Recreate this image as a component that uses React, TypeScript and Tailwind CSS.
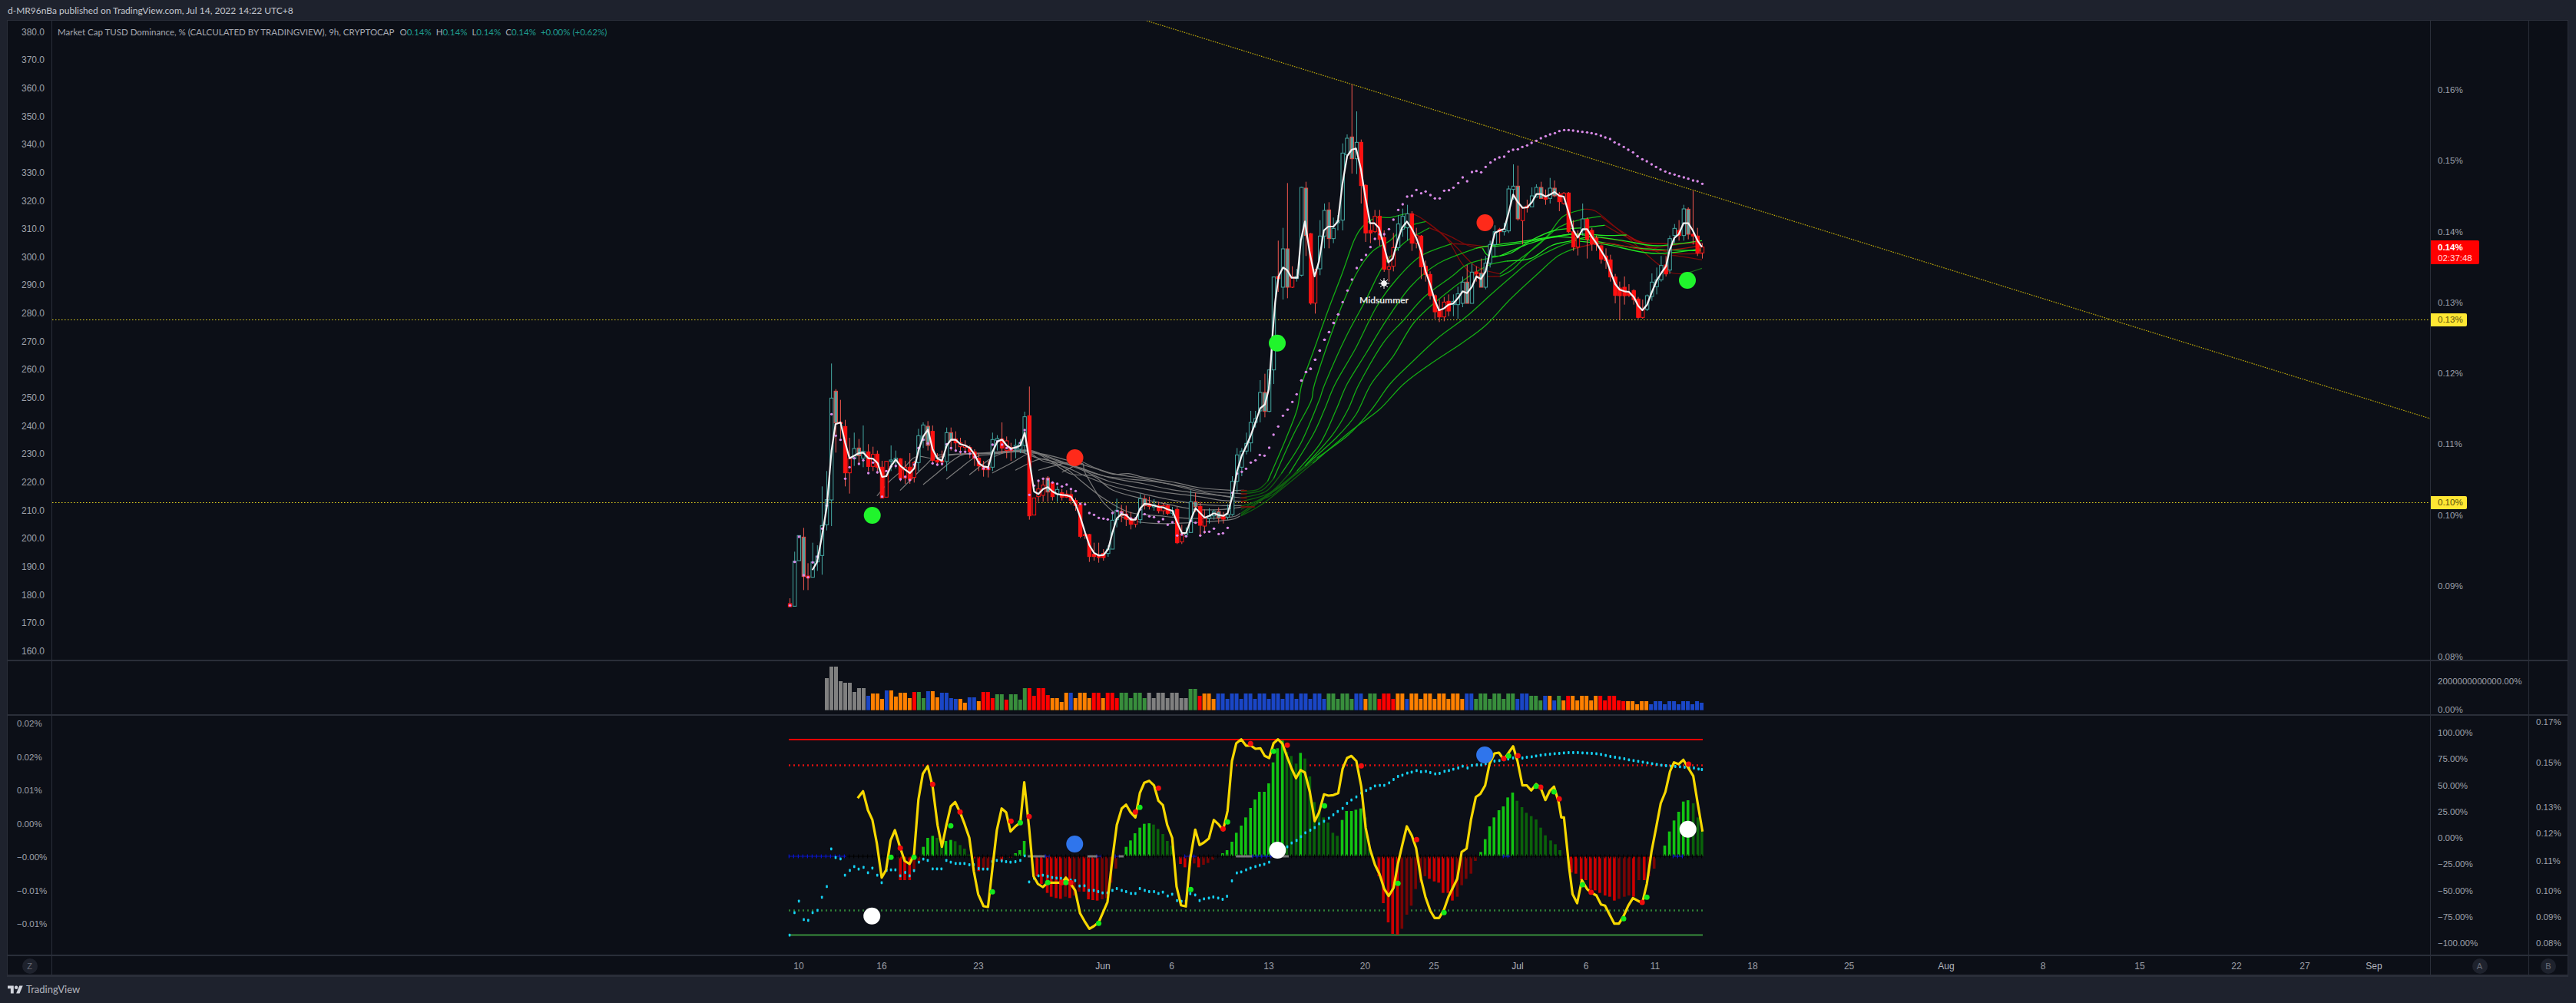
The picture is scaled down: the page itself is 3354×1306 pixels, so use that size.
import React from "react";

type P = [number, number];
const z2 = (x: number, y: number): P => [1000 + x * 0.5102, 400 + y / 3];
const z3 = (x: number, y: number): P => [1600 + x * 0.4464, 100 + y / 3];
const z5 = (x: number, y: number): P => [1000 + x * 0.6378, 850 + y / 3];
const z6 = (x: number, y: number): P => [2000 + x * 0.8635, 850 + y / 3];
const pts = (f: (x: number, y: number) => P, a: number[]): P[] => {
  const r: P[] = [];
  for (let i = 0; i < a.length; i += 2) r.push(f(a[i], a[i + 1]));
  return r;
};
const poly = (p: P[]) => p.map((q) => `${q[0].toFixed(1)},${q[1].toFixed(1)}`).join(" ");
const smooth = (p: P[]) => {
  let d = `M${p[0][0].toFixed(1)} ${p[0][1].toFixed(1)}`;
  for (let i = 0; i < p.length - 1; i++) {
    const a = p[Math.max(0, i - 1)], b = p[i], c = p[i + 1], e = p[Math.min(p.length - 1, i + 2)];
    const c1: P = [b[0] + (c[0] - a[0]) / 6, b[1] + (c[1] - a[1]) / 6];
    const c2: P = [c[0] - (e[0] - b[0]) / 6, c[1] - (e[1] - b[1]) / 6];
    d += `C${c1[0].toFixed(1)} ${c1[1].toFixed(1)} ${c2[0].toFixed(1)} ${c2[1].toFixed(1)} ${c[0].toFixed(1)} ${c[1].toFixed(1)}`;
  }
  return d;
};

const whiteLine: P[] = [
  ...pts(z2, [113,1027,125,995,137,900,150,780,162,560,172,457,185,450,197,530,208,590,222,578,232,570,243,568,256,590,268,592,280,610,291,663,302,660,314,620,326,595,338,620,350,635,362,648,373,630,384,560,396,505,408,478,420,555,432,590,444,600,456,540,467,517,479,518,491,535,503,540,515,550,527,575,538,610,550,622,562,625,573,565,585,525,597,517,609,540,620,552,632,548,644,540,655,490,667,600,679,720,690,730,702,710,714,703,726,720,738,730,750,733,762,735,773,740,785,770,797,820,809,880,820,930,832,960,844,970,856,968,868,945,879,880,890,825,902,808,914,812,926,830,938,830,950,785,961,768,973,770,985,775,997,780,1009,782,1020,790,1032,795,1044,840,1056,882,1067,882,1079,830,1091,785,1103,805,1114,822,1126,815,1138,805,1150,812,1162,815,1173,805,1185,740,1197,640,1209,580,1221,540,1232,500,1244,450,1256,395,1268,380,1278,320,1286,150]),
  ...pts(z3, [118,1200,128,1000,135,880,145,780,158,745,170,755,183,785,200,785,210,640,222,565,235,680,250,780,263,720,277,600,290,585,305,585,318,565,331,420,345,310,358,285,371,280,385,360,398,470,412,572,425,572,438,590,452,660,465,725,478,710,492,640,505,590,519,565,532,590,547,630,560,680,574,760,587,810,600,870,613,912,627,905,641,890,655,885,668,865,682,838,695,845,709,820,722,780,735,790,749,760,762,680,776,610,790,600,803,595,816,530,829,460,843,490,857,512,870,510,884,490,897,458,911,458,924,468,937,460,950,450,964,465,977,468,991,530,1005,600,1018,628,1032,595,1045,595,1059,625,1072,650,1086,680,1100,710,1113,760,1127,810,1140,832,1154,838,1167,840,1181,860,1194,895,1206,912,1220,890,1234,840,1248,795,1262,765,1275,740,1285,680,1299,630,1312,615,1326,572,1340,572,1353,600,1367,640,1380,665]),
];

const candles2 = `56,1158,1170,1137,1170,r 68,992,1168,955,1168,t 79,892,990,892,990,t 91,898,1052,862,1105,f 102,1050,1058,1000,1105,r 114,995,1055,920,1055,t 126,972,995,930,1030,t 138,853,970,700,1045,t 150,752,850,640,872,t 162,355,753,220,855,t 173,328,452,320,568,f 185,450,452,362,512,r 197,466,647,440,700,r 208,592,647,510,728,h 220,552,592,490,620,t 232,550,580,515,610,f 243,563,590,462,625,t 256,565,622,535,640,r 268,575,622,545,640,h 279,574,625,560,650,r 291,625,745,600,745,r 302,602,742,600,742,h 314,597,602,540,640,t 326,590,600,560,630,t 338,592,668,590,680,r 350,625,668,600,690,h 362,625,675,570,690,r 373,607,665,600,685,h 384,502,607,475,640,t 396,460,520,450,550,t 408,465,540,445,560,f 420,485,598,462,615,r 432,598,605,570,620,r 444,600,605,560,620,r 456,490,603,470,640,t 467,490,520,470,560,f 479,515,530,485,565,r 491,530,545,510,575,h 503,540,548,520,575,h 515,548,565,540,590,r 527,565,590,555,620,r 538,590,620,570,640,r 550,622,635,600,662,r 562,625,635,600,665,h 573,517,625,490,640,t 585,513,520,500,560,t 597,515,550,450,570,r 609,522,560,505,590,h 620,548,560,530,600,r 632,540,555,515,590,t 644,530,555,515,570,t 655,428,540,408,570,t 667,424,815,310,830,r 679,745,812,745,812,h 690,710,740,680,760,h 702,695,735,665,760,h 714,667,722,660,760,f 726,687,740,680,755,r 738,712,730,700,760,t 750,725,742,710,755,r 762,730,742,715,745,r 773,732,755,710,770,r 785,755,775,745,795,r 797,772,895,765,902,r 809,888,892,880,905,r 820,888,974,885,995,r 832,965,974,920,990,r 844,968,978,920,998,r 856,962,978,945,990,r 868,945,962,930,975,t 879,832,945,800,945,t 890,793,830,748,860,t 902,797,815,772,840,f 914,808,828,775,855,r 926,825,848,800,868,r 938,828,848,820,860,h 950,748,830,730,845,t 961,748,775,735,790,f 973,768,778,740,790,r 985,772,780,750,795,t 997,775,795,760,805,r 1009,775,795,765,810,h 1020,775,805,770,812,r 1032,795,805,780,815,t 1044,790,920,780,925,r 1056,885,917,850,925,h 1067,882,890,860,895,t 1079,760,880,715,880,t 1091,760,780,725,800,f 1103,778,852,760,895,r 1114,825,855,790,885,h 1126,815,825,785,845,t 1138,798,815,790,830,t 1150,798,825,782,845,f 1162,818,828,800,845,r 1173,810,820,770,830,t 1185,680,810,660,815,t 1197,577,680,550,725,t 1209,562,625,550,660,t 1221,532,562,490,575,t 1232,450,530,405,565,t 1244,435,450,405,470,t 1256,333,405,285,450,t 1268,333,407,260,430,f 1279,245,407,245,410,t`;
const candles3 = `131,782,1145,780,1200,t 144,780,788,640,840,r 158,672,822,590,870,t 171,672,822,415,865,f 185,782,822,740,825,h 198,780,788,750,800,t 212,432,775,430,780,t 225,435,620,410,700,f 239,613,884,610,890,r 252,755,884,750,925,h 266,622,750,560,775,t 279,522,622,495,670,t 292,520,632,490,670,f 305,592,632,550,650,t 318,562,570,540,600,t 332,298,560,260,600,t 345,240,305,225,320,t 359,235,320,30,378,f 373,256,320,135,380,t 386,256,425,245,495,r 399,424,610,420,645,r 413,600,610,570,650,r 426,545,605,520,610,h 440,545,635,520,660,r 453,628,752,600,762,r 467,742,752,700,800,h 480,667,740,610,760,h 494,575,667,540,680,t 507,545,595,515,625,t 521,535,590,500,640,t 534,535,650,525,680,r 547,620,650,590,670,h 561,622,742,618,790,r 574,740,772,718,800,r 587,772,855,760,870,r 601,855,918,850,945,r 614,912,938,870,958,r 628,880,938,860,955,h 641,877,915,850,935,r 655,877,890,850,935,t 668,848,890,820,945,t 682,802,885,780,900,t 695,802,885,735,885,f 709,763,885,730,885,t 722,762,770,740,800,r 736,767,822,710,822,f 749,728,822,700,830,t 762,655,728,640,745,t 776,605,655,580,700,t 790,595,605,590,650,r 803,595,605,570,620,t 816,438,602,425,610,t 830,427,440,342,480,t 843,427,555,347,562,f 857,510,562,510,655,h 870,505,512,480,530,r 884,465,508,432,510,t 897,432,470,420,470,t 911,432,475,410,475,f 924,472,478,440,500,r 937,435,475,395,495,t 950,435,465,405,470,f 964,458,488,450,525,r 977,455,495,450,500,h 991,454,605,450,610,r 1005,605,665,560,680,r 1018,625,665,600,698,h 1032,555,600,495,620,t 1045,557,635,550,710,r 1059,600,652,590,680,r 1072,630,655,620,680,r 1086,660,712,655,730,r 1100,700,718,670,750,r 1113,715,782,695,800,r 1127,782,854,770,885,r 1140,825,855,800,950,r 1154,822,855,780,890,r 1167,845,854,810,860,r 1181,835,870,830,890,r 1194,868,940,860,945,r 1207,910,940,870,945,h 1220,855,908,850,915,t 1234,802,858,768,875,t 1248,793,820,745,850,t 1261,737,793,700,800,t 1275,735,770,700,780,r 1286,632,755,620,770,t 1300,592,620,575,650,t 1313,600,620,560,640,r 1327,516,620,500,640,t 1340,517,615,510,635,f 1354,615,622,445,655,r 1367,622,688,590,700,r 1381,665,688,650,710,h`;
const parseCandles = (s: string, f: (x: number, y: number) => P) =>
  s.split(" ").map((c) => {
    const v = c.split(",");
    const [x, top] = f(+v[0], +v[1]);
    const bot = f(+v[0], +v[2])[1], hi = f(+v[0], +v[3])[1], lo = f(+v[0], +v[4])[1];
    return { x, top, bot, hi, lo, k: v[5] };
  });
const candles = [...parseCandles(candles2, z2), ...parseCandles(candles3, z3)];

const purple: P[] = [
  ...pts(z2, [56,1165,68,995,79,897,91,1047,102,1055,114,997,126,975,138,865,150,775,162,418,173,502,185,518,197,670,208,625,220,590,232,612,243,598,256,648,268,607,279,645,291,740,302,640,314,622,326,620,338,672,350,662,362,675,373,615,384,550,396,517,408,532,420,610,432,615,444,612,456,535,467,550,479,560,491,565,503,565,515,572,527,585,538,605,550,630,562,630,573,537,585,525,597,537,609,550,620,555,632,548,644,530,655,480,667,733,679,697,690,678,702,670,714,672,726,685,738,690,750,700,762,693,773,710,785,718,797,768,809,770,820,804,832,811,844,823,856,826,867,829,879,804,891,796,902,802,914,812,926,825,938,825,950,790,961,808,973,817,985,820,997,838,1008,828,1020,850,1032,840,1044,892,1056,888,1067,895,1079,835,1091,842,1103,892,1114,878,1126,877,1138,865,1150,886,1161,883,1173,862,1185,725,1197,650,1209,643,1220,631,1232,607,1244,598,1255,577,1267,580,1279,549,1290,498,1302,466,1314,424,1326,400,1338,370,1349,340,1361,286,1373,253,1385,241,1396,205,1408,169,1420,127,1432,97,1443,61,1455,28]),
  ...pts(z3, [212,1187,225,1153,238,1140,252,1105,265,1070,279,1027,292,997,306,962,319,928,332,880,346,835,359,792,373,747,387,715,400,696,413,665,426,633,440,615,453,615,467,595,480,558,494,520,507,498,520,468,534,465,547,442,561,455,574,448,588,462,601,475,615,475,628,445,642,443,655,433,669,415,682,393,695,408,709,372,722,368,736,373,749,352,763,335,776,323,789,315,803,312,816,292,829,285,843,283,856,274,870,268,883,258,897,250,910,240,924,232,937,225,951,220,964,212,978,208,991,208,1004,210,1018,213,1031,215,1045,217,1058,220,1071,224,1085,230,1098,237,1112,243,1125,256,1138,264,1152,274,1165,285,1179,295,1192,310,1206,322,1219,330,1233,342,1246,352,1259,362,1273,370,1286,377,1300,382,1313,388,1327,393,1340,398,1354,405,1367,408,1381,418]),
];

const grayLines: P[][] = [
  [278,737,310,680,340,640,370,590,390,583,420,590,480,575,560,572,660,565,720,580,780,605,830,628,880,652,920,650,960,665,1040,685,1100,705,1180,715,1215,715],
  [337,716,370,665,400,620,430,580,470,575,560,568,660,558,700,575,780,620,860,660,980,680,1060,700,1120,720,1210,728],
  [396,693,430,650,470,600,500,575,560,570,640,565,690,590,780,620,870,665,960,690,1040,715,1210,745],
  [455,672,490,630,530,585,570,575,660,560,720,590,800,635,870,680,960,710,1020,725,1100,740,1160,755,1210,758],
  [514,655,560,600,600,570,660,565,700,600,760,625,810,660,880,700,960,730,1020,750,1100,770,1160,775,1210,775],
  [572,648,620,610,670,570,710,590,770,650,830,660,880,715,960,750,1020,770,1090,790,1160,790,1210,780],
  [631,637,680,600,710,595,760,630,800,680,850,740,920,800,1000,815,1080,825,1180,820,1205,805],
  [690,637,730,620,790,600,830,625,880,650,940,665,1020,690,1100,720,1190,745],
  [750,645,800,610,810,650,860,770,920,830,1000,845,1100,840,1180,830,1205,815],
].map((a) => pts(z2, a));

const G = "#14ad14", B = "#22e622", R = "#7d0a0a", D = "#1a6e1a", RR = "#a50c0c";
const ribbon: [string, P[]][] = [];
const chain = (lead: number[], segs: [string, number[]][]) => {
  const start = pts(z2, lead);
  ribbon.push(["#0f5f0f", start.slice(0, 3)]);
  const first = pts(z3, segs[0][1]);
  ribbon.push([segs[0][0], [...start.slice(2), ...first]]);
  let last = first[first.length - 1];
  for (const s of segs.slice(1)) {
    const p = pts(z3, s[1]);
    ribbon.push([s[0], [last, ...p]]);
    last = p[p.length - 1];
  }
};
chain([1207,720,1250,712,1275,680,1320,520,1350,400], [
  [G,[213,1200,250,1060,290,910,330,770,365,640,390,585,430,550,470,550,515,535]],
  [R,[545,540,590,580,640,640,680,730,720,775,790,780]],
  [G,[830,750,880,680,930,620,975,545,1035,517]],
  [R,[1070,525,1130,590,1190,660,1250,730,1290,765,1330,770]],
  [D,[1380,748]],
]);
chain([1207,730,1260,715,1290,670,1340,500,1385,370], [
  [G,[250,1200,300,1000,340,860,380,750,420,680,470,640,510,590,575,565]],
  [R,[610,600,660,660,720,740,790,770]],
  [G,[840,720,900,660,960,590,1020,560,1085,545]],
  [R,[1130,590,1190,640,1260,690,1310,700,1380,715]],
]);
chain([1207,745,1270,720,1310,650,1360,530,1405,370], [
  [G,[280,1200,340,1020,400,870,450,740,510,650,585,590]],
  [R,[640,620,700,660,740,670]],
  [B,[760,700,820,690,880,640,950,600,1030,590,1097,580]],
  [R,[1150,620,1220,660,1300,690,1380,690]],
]);
chain([1207,760,1280,725,1330,650,1390,500,1420,400], [
  [G,[310,1200,370,1060,430,900,490,790,560,700,650,652]],
  [R,[700,655,760,665]],
  [B,[850,650,1000,615,1100,620,1160,618]],
  [RR,[1220,650,1380,650]],
]);
chain([1207,778,1290,730,1350,640,1410,530,1450,400], [
  [G,[345,1200,400,1080,460,950,530,820,610,730,720,670]],
  [B,[760,660,870,640,1000,615,1060,625]],
  [R,[1140,640,1220,670,1380,640]],
]);
chain([1207,790,1300,710,1370,620,1440,500,1480,400], [
  [G,[380,1200,450,1040,510,950,570,860,650,780,700,730,790,700]],
  [B,[880,650,960,625,1060,640,1200,670,1380,680]],
]);
chain([1207,805,1300,705,1370,620,1450,510,1500,420], [
  [G,[415,1200,480,1090,540,960,620,860,700,780,760,735,810,720]],
  [B,[880,710,940,660,1000,640,1060,625,1150,640,1250,660,1380,640]],
]);
chain([1207,812,1290,720,1400,590,1480,500,1540,400], [
  [G,[470,1200,530,1120,610,1020,690,940,765,850,825,780,880,720,960,665,1010,640]],
  [B,[1100,655,1240,690,1380,672]],
]);
chain([1207,815,1270,760,1390,610,1490,480,1560,400], [
  [G,[510,1200,590,1120,680,1040,750,970,820,870,900,770,960,700,1010,670]],
  [RR,[1100,650,1240,680,1380,660]],
]);

const redStubs = [716, 729, 745, 759, 780].map((y) => pts(z2, [1207, y, 1222 + (y === 780 ? 20 : 0), y]));

// Volume
const runs = "g9 b1 o3 b1 o5 r1 G2 b1 o2 b4 o2 b2 o1 r3 G2 r1 G4 r5 o4 b1 o4 r2 o1 r3 G6 g9 G2 r1 o3 b24 G6 b2 o1 G2 r4 o2 b1 o2 o10 b2 G9 b3 G3 b1 o1 b1 G1 o1 r1 o6 r6 o5 b12";
const volCols: Record<string, string> = { g: "#808080", b: "#1a46c6", o: "#ff8000", r: "#ff0000", G: "#388e3c" };
const volColors = runs.split(" ").flatMap((r) => Array<string>(+r.slice(1)).fill(volCols[r[0]]));
const volTop = [96,51,51,108,114,114,150,135,135,165,156,156,177,144,144,168,153,153,174,150,150,174,147,147,171,153,153,174,177,177,192,171,171,186,150,150,174,159,159,180,159,159,180,135,135,165,135,135,162,174,174,189,153,153,174,153,153,174,153,153,174,153,153,174,153,153,174,153,153,174,153,174,153,153,174,153,153,174,174,138,138,165,156,156,177];
const volTail = [165,165,183,165,165,183,165,183,165,165,183,165,165,183,165,165,183,165,165,183,186,186,186,198,186,186,198,186,186,198,186,186,198,186,186,198,186,192];
const vols = volColors.map((c, i) => {
  let zy = 156;
  if (i < volTop.length) zy = volTop[i];
  else if (i < 153) zy = [156, 156, 177][(i - 85) % 3];
  else zy = volTail[i - 153] ?? 186;
  return { c, x: 1074 + i * 5.995, y: 850 + zy / 3 };
});

// Oscillator
const histPts: P[] = [
  ...pts(z5, [270,885,279,885,289,885,298,850,308,815,317,755,326,720,336,712,345,720,354,745,363,732,373,728,382,733,392,748,401,762,410,785,420,800,430,850,440,845,449,840,458,815,468,795,477,810,495,798,505,780,514,768,523,732,533,785,549,870,558,900,570,935,578,950,588,955,597,958,607,950,616,955,625,945,635,930,645,930,654,960,663,963,672,965,682,960,691,955,700,895,710,840,731,755,740,730,749,702,759,680,768,665,778,663,787,668,796,685,806,705,815,732,824,750,842,822,851,835,861,830,870,820,879,835,889,825,898,818,908,805,928,780,937,768,947,735,956,700,966,672,975,640,985,603,994,570,1003,540,1013,540,1022,507,1031,425,1040,370,1050,340,1059,385,1068,400,1078,430,1087,388,1096,410,1106,480,1115,580,1125,610,1134,640,1143,660,1153,700,1162,712,1172,650,1181,615,1191,615,1200,610,1210,605,1219,640,1228,760,1247,870,1256,975,1266,1050,1275,1095,1285,1098,1294,1075,1304,1020,1313,985,1322,920,1332,895,1341,870,1350,880,1360,890,1369,895,1378,935,1388,935,1397,965,1407,950,1416,905,1425,880,1435,860,1444,810,1455,775,1464,725,1473,675,1482,640,1492,612,1501,597,1510,562,1520,543,1529,575,1539,600,1548,622,1558,635]),
  ...pts(z6, [0,648,7,680,14,710,22,730,29,745,36,768,53,855,60,860,68,885,75,885,82,920,89,925,96,935,104,945,111,950,118,965,125,958,133,950,140,945,147,950,155,885,163,885,170,870,178,840,194,750,201,695,208,652,215,618,222,578,229,573,237,585,244,640,250,690]),
];
const BASE = 1114;
const hist = histPts.map((p, i) => {
  const up = p[1] < BASE;
  const prev = histPts[i - 1];
  const grow = !prev || (prev[1] < BASE) !== up || Math.abs(p[1] - BASE) >= Math.abs(prev[1] - BASE);
  const c = up ? (grow ? "#12c412" : "#0a630a") : grow ? "#cc0000" : "#780404";
  return { x: p[0], y: Math.min(p[1], BASE), h: Math.abs(p[1] - BASE), c };
});
const yellow: P[] = [
  ...pts(z5, [183,565,194,538,204,612,213,650,222,740,232,875,241,845,250,730,259,690,270,760,279,810,289,822,298,785,307,570,316,470,326,440,336,520,346,670,355,755,364,670,373,597,382,580,392,620,401,665,411,720,420,850,429,940,440,987,449,990,458,840,467,690,477,605,486,620,495,695,505,675,515,660,523,503,533,680,542,870,551,900,561,912,571,895,580,895,590,895,600,895,608,875,618,900,627,925,637,1015,646,1045,656,1075,665,1065,675,1050,684,1010,693,970,703,800,712,670,722,605,731,590,740,620,750,640,759,545,768,505,778,497,788,515,797,575,806,592,815,670,825,720,834,910,843,983,853,988,862,800,872,688,881,748,890,738,900,722,910,650,920,668,929,690,938,615,947,420,956,350,966,335,976,360,986,360,995,372,1005,370,1014,400,1023,408,1032,350,1041,335,1050,352,1059,400,1069,450,1078,487,1087,455,1096,465,1106,540,1116,655,1125,620,1135,550,1144,555,1154,553,1164,545,1173,450,1182,408,1191,400,1201,420,1211,520,1220,680,1229,765,1239,825,1248,860,1258,920,1267,947,1277,915,1286,820,1295,745,1304,675,1314,710,1323,760,1333,880,1342,950,1352,1005,1361,1033,1370,1033,1380,1000,1389,950,1398,915,1407,880,1416,775,1426,762,1435,650,1445,560,1454,548,1464,515,1473,430,1483,390,1492,387,1502,415,1511,390,1521,362,1530,420,1540,515,1549,515,1558,535,1568,510]),
  ...pts(z6, [7,525,14,572,21,535,27,520,34,580,38,640,42,640,50,840,55,940,62,975,69,885,77,920,84,935,91,945,98,980,104,985,111,1020,118,1055,125,1055,132,1025,139,985,146,955,153,965,160,975,167,900,174,775,181,680,188,585,195,540,202,460,208,425,215,432,222,415,229,445,237,478,244,590,251,695]),
];
const greenDots = [...pts(z5, [251,796,298,796,373,673,458,931,515,661,571,895,608,895,675,1054,759,601,863,922,938,658,1032,382,1136,595,1286,898,1380,1012,1512,400]), ...pts(z6, [0,518,27,540,70,903,132,1036,167,952])];
const redDots = [...pts(z5, [270,760,336,511,392,619,496,655,533,637,600,895,618,895,750,619,797,526,929,685,985,352,1060,358,1211,439,1324,727,1502,410,1531,399]), ...pts(z6, [7,522,35,568,83,932,160,972,230,432])];
const cyan: P[] = [
  ...pts(z5, [44,1100,54,1012,63,967,73,1039,82,1042,91,1012,101,1003,110,952,120,910,129,763,138,797,148,802,157,866,167,847,176,832,185,842,195,835,204,856,213,838,223,866,232,895,242,847,251,845,260,845,270,868,280,855,289,868,298,848,308,815,317,803,326,808,336,841,345,841,354,841,364,808,373,815,383,820,392,820,401,820,411,825,420,825,430,840,439,842,448,842,458,813,467,808,477,810,486,813,495,815,505,813,515,808,524,790,533,892,543,878,552,868,561,866,571,870,580,875,589,877,598,878,608,882,618,885,627,887,636,908,646,907,655,925,665,925,674,930,683,935,693,935,703,925,712,918,722,925,731,930,741,937,750,937,759,918,769,925,778,930,788,930,797,937,806,932,816,947,825,940,835,965,844,968,853,968,862,938,872,943,881,965,890,958,900,955,909,951,919,955,928,960,937,948,947,888,957,857,966,853,976,845,985,838,995,832,1004,827,1013,823,1023,815,1032,780,1042,780,1051,760,1060,755,1069,740,1079,730,1088,715,1097,700,1107,690,1116,680,1125,665,1135,655,1145,643,1154,630,1163,617,1173,605,1182,585,1191,572,1201,560,1211,545,1221,535,1230,527,1239,517,1249,515,1258,515,1268,505,1277,492,1286,480,1295,475,1305,467,1314,463,1324,457,1333,462,1343,460,1352,465,1362,470,1371,468,1381,460,1390,457,1399,452,1409,447,1418,440,1428,447,1437,437,1447,435,1456,435,1465,430,1474,425,1483,420,1493,418,1502,415,1511,412,1521,408,1530,405,1540,408,1549,405,1559,403,1568,400]),
  ...pts(z6, [7,397,14,395,21,393,28,391,35,390,42,388,49,387,56,387,63,387,70,388,77,389,84,390,91,391,98,394,105,398,112,402,119,405,126,408,133,411,140,415,147,418,154,421,161,424,168,427,175,430,182,433,189,436,196,438,203,440,210,441,217,442,224,444,231,446,238,447,245,451,250,453]),
];
const zeroSeg = (a: number, b: number) => [z5(a, 792)[0], z5(b, 792)[0]];
const zeroBlue = [zeroSeg(42, 160), zeroSeg(565, 575), zeroSeg(670, 680), zeroSeg(708, 718), zeroSeg(850, 875), zeroSeg(988, 1030), zeroSeg(1500, 1515), [z6(206, 0)[0], z6(222, 0)[0]]];
const zeroGray = [zeroSeg(530, 565), zeroSeg(652, 672), zeroSeg(716, 726), zeroSeg(955, 988), zeroSeg(1030, 1063)];

const FONT = "font-['Liberation_Sans',Arial,sans-serif]";

function VAxis({ ticks, h, cls = "text-[#9ea1aa]", size = "text-[12px]", left }: { ticks: [string, number][]; h: number; cls?: string; size?: string; left: number }) {
  let prev = 0;
  return (
    <div className={`flex flex-col overflow-hidden ${cls} ${size}`} style={{ height: h, paddingLeft: left }}>
      {ticks.map(([t, y]) => {
        const mt = y - 7 - prev;
        prev = y + 7;
        return (
          <div key={t + y} className="h-[14px] leading-[14px] whitespace-nowrap shrink-0" style={{ marginTop: mt }}>
            {t}
          </div>
        );
      })}
    </div>
  );
}

const leftMain: [string, number][] = Array.from({ length: 23 }, (_, i) => [(380 - i * 10).toFixed(1), 41.7 - 27 + i * 36.65]);
const rightMain: [string, number][] = ["0.16%", "0.15%", "0.14%", "0.13%", "0.12%", "0.11%", "0.10%", "0.09%", "0.08%"].map((t, i) => [t, 117 - 27 + i * 92.25]);
const leftOsc: [string, number][] = ["0.02%", "0.02%", "0.01%", "0.00%", "−0.00%", "−0.01%", "−0.01%"].map((t, i) => [t, 941 - 931 + i * 43.5]);
const rightOsc: [string, number][] = ["100.00%", "75.00%", "50.00%", "25.00%", "0.00%", "−25.00%", "−50.00%", "−75.00%", "−100.00%"].map((t, i) => [t, 953 - 931 + i * 34.25]);
const farOsc: [string, number][] = [["0.17%", 939], ["0.15%", 992], ["0.13%", 1050], ["0.12%", 1084], ["0.11%", 1120], ["0.10%", 1159], ["0.09%", 1193], ["0.08%", 1227]].map(([t, y]) => [t as string, (y as number) - 931]);
const timeTicks: [string, number, boolean][] = [["10",1040,false],["16",1148,false],["23",1274,false],["Jun",1436,true],["6",1525.5,false],["13",1652,false],["20",1777.5,false],["25",1867,false],["Jul",1976,true],["6",2065,false],["11",2155,false],["18",2282,false],["25",2407.6,false],["Aug",2534,true],["8",2660,false],["15",2786,false],["22",2912,false],["27",3001,false],["Sep",3091,true]];

function TimeAxis() {
  let prev = 68;
  return (
    <div className="flex items-center h-full text-[12px]">
      {timeTicks.map(([t, x, major]) => {
        const ml = x - 20 - prev;
        prev = x + 20;
        return (
          <div key={t + x} className={`w-[40px] shrink-0 text-center ${major ? "text-[#b2b5be]" : "text-[#9ea1aa]"}`} style={{ marginLeft: ml }}>
            {t}
          </div>
        );
      })}
    </div>
  );
}

function Round({ l }: { l: string }) {
  return <div className="w-[20px] h-[20px] rounded-full bg-[#1e222d] text-[#6a6d78] text-[11px] flex items-center justify-center">{l}</div>;
}

const Dots = () => (
  <g fill="#d98ae8">
    {purple.map((p, i) => (
      <circle key={i} cx={p[0]} cy={p[1]} r={1.7} />
    ))}
  </g>
);

function MainChart() {
  return (
    <svg viewBox="68 27 3096 832" className="block w-[3096px] h-[832px]">
      <line x1={68} x2={3164} y1={416.5} y2={416.5} stroke="#e8d820" strokeDasharray="1.5 2.5" />
      <line x1={68} x2={3164} y1={654.5} y2={654.5} stroke="#e8d820" strokeDasharray="1.5 2.5" />
      <line x1={1493} y1={27} x2={3164} y2={545} stroke="#c4ae0a" strokeWidth={1.2} strokeDasharray="1.5 1.5" />
      {grayLines.map((l, i) => (
        <path key={i} d={smooth(l)} fill="none" stroke="#7a7a7a" strokeWidth={1.2} />
      ))}
      {ribbon.map(([c, l], i) => (
        <path key={i} d={smooth(l)} fill="none" stroke={c} strokeWidth={1.3} />
      ))}
      {redStubs.map((l, i) => (
        <polyline key={i} points={poly(l)} fill="none" stroke="#8a0c0c" strokeWidth={1.6} />
      ))}
      {candles.map((c, i) => {
        const wick = c.k === "t" ? "#45a8a2" : "#f2574e";
        const teal = c.k === "t";
        return (
          <g key={i}>
            <line x1={c.x} x2={c.x} y1={c.hi} y2={c.lo} stroke={wick} />
            <rect
              x={c.x - 2.2}
              y={c.top}
              width={4.4}
              height={Math.max(1.5, c.bot - c.top)}
              fill={c.k === "r" ? "#ff1010" : c.k === "f" ? "#59a09c" : "#0c0f17"}
              stroke={teal ? "#45a8a2" : c.k === "f" ? "#e84a44" : "#ff1414"}
              strokeWidth={1}
            />
          </g>
        );
      })}
      <Dots />
      <polyline points={poly(whiteLine)} fill="none" stroke="#f2f2f2" strokeWidth={2.2} strokeLinejoin="round" />
      <circle cx={1135.7} cy={671} r={11} fill="#20f42c" />
      <circle cx={1663} cy={446.7} r={11} fill="#20f42c" />
      <circle cx={2197} cy={365} r={11} fill="#20f42c" />
      <circle cx={1399.5} cy={596} r={11} fill="#ff2a1a" />
      <circle cx={1933.5} cy={290} r={11} fill="#ff2a1a" />
      <g stroke="#f5f5f5" strokeWidth={1}>
        <line x1={1802} x2={1802} y1={362} y2={376} />
        <line x1={1795} x2={1809} y1={369} y2={369} />
        <line x1={1797} x2={1807} y1={364} y2={374} />
        <line x1={1797} x2={1807} y1={374} y2={364} />
        <circle cx={1802} cy={369} r={3.4} fill="#f5f5f5" />
      </g>
      <text x={1802} y={395} textAnchor="middle" fill="#e6e6e6" fontSize={12} fontWeight={700} className="font-['Lato',sans-serif]">
        Midsummer
      </text>
    </svg>
  );
}

function VolumeChart() {
  return (
    <svg viewBox="68 860 3096 70" className="block w-[3096px] h-[70px]">
      {vols.map((v, i) => (
        <rect key={i} x={v.x} y={v.y} width={5} height={923.7 - v.y} fill={v.c} />
      ))}
    </svg>
  );
}

function OscChart() {
  return (
    <svg viewBox="68 931 3096 312" className="block w-[3096px] h-[312px]">
      <line x1={1027} x2={2217} y1={962} y2={962} stroke="#f20000" strokeWidth={2} />
      <line x1={1027} x2={2217} y1={995.5} y2={995.5} stroke="#e01010" strokeWidth={2.4} strokeDasharray="2 4" />
      <line x1={1027} x2={2217} y1={1184.5} y2={1184.5} stroke="#2e8036" strokeWidth={2.4} strokeDasharray="2 4" />
      <line x1={1027} x2={2217} y1={1216.5} y2={1216.5} stroke="#388e3c" strokeWidth={2} />
      {hist.map((h, i) => (
        <rect key={i} x={h.x - 1.8} y={h.y} width={3.6} height={h.h} fill={h.c} />
      ))}
      <line x1={1027} x2={2217} y1={1114} y2={1114} stroke="#000" />
      <line x1={1027} x2={2217} y1={1114} y2={1114} stroke="#000" strokeWidth={5} strokeDasharray="1.2 4.8" />
      {zeroBlue.map(([a, b], i) => (
        <g key={i}>
          <line x1={a} x2={b} y1={1114} y2={1114} stroke="#0c18d0" />
          <line x1={a} x2={b} y1={1114} y2={1114} stroke="#0c18d0" strokeWidth={5} strokeDasharray="1.2 4.8" />
        </g>
      ))}
      {zeroGray.map(([a, b], i) => (
        <line key={i} x1={a} x2={b} y1={1114} y2={1114} stroke="#777" strokeWidth={3} />
      ))}
      {cyan.map((p, i) => (
        <rect key={i} x={p[0] - 1.3} y={p[1] - 1.9} width={2.6} height={3.8} rx={0.8} fill="#14d2f5" />
      ))}
      <polyline points={poly(yellow)} fill="none" stroke="#f7d800" strokeWidth={3.2} strokeLinejoin="round" />
      {redDots.map((p, i) => (
        <circle key={i} cx={p[0]} cy={p[1]} r={3.5} fill="#f00d0d" />
      ))}
      {greenDots.map((p, i) => (
        <circle key={i} cx={p[0]} cy={p[1]} r={3.5} fill="#14e81c" />
      ))}
      <circle cx={z5(626, 744)[0]} cy={z5(626, 744)[1]} r={11} fill="#2f75ec" />
      <circle cx={z5(1463, 396)[0]} cy={z5(1463, 396)[1]} r={11} fill="#2f75ec" />
      <circle cx={z5(212, 1025)[0]} cy={z5(212, 1025)[1]} r={11} fill="#fff" />
      <circle cx={z5(1040, 768)[0]} cy={z5(1040, 768)[1]} r={11} fill="#fff" />
      <circle cx={z6(229, 686)[0]} cy={z6(229, 686)[1]} r={11} fill="#fff" />
    </svg>
  );
}

export default function App() {
  const line = "border-[#2a2e39]";
  const Val = ({ v }: { v: string }) => <span className="text-[#1f9c8f]">{v}</span>;
  return (
    <div className={`w-[3354px] h-[1306px] flex flex-col bg-[#1e222d] overflow-hidden ${FONT}`}>
      <div className="h-[27px] shrink-0 flex items-center pl-[10px] text-[12px] text-[#c3c6ce] font-['Lato',sans-serif]">
        d-MR96nBa published on TradingView.com, Jul 14, 2022 14:22 UTC+8
      </div>
      <div className={`ml-[10px] w-[3333px] h-[1244px] shrink-0 bg-[#0c0f17] outline-1 outline-[#2a2e39] grid grid-cols-[58px_3096px_128px_51px] grid-rows-[832px_71px_313px_28px] border-b-2 ${line}`}>
        {/* row 1 */}
        <div className={`border-r ${line}`}>
          <VAxis ticks={leftMain} h={832} left={18} />
        </div>
        <div className="relative">
          <MainChart />
          <div className="absolute left-[7px] top-[8px] flex items-center gap-[6px] text-[11.5px] leading-[14px] text-[#a6a9b2] whitespace-nowrap font-['Lato',sans-serif]">
            <span className="mr-[1px]">Market Cap TUSD Dominance, % (CALCULATED BY TRADINGVIEW), 9h, CRYPTOCAP</span>
            <span>O<Val v="0.14%" /></span>
            <span>H<Val v="0.14%" /></span>
            <span>L<Val v="0.14%" /></span>
            <span>C<Val v="0.14%" /></span>
            <Val v="+0.00% (+0.62%)" />
          </div>
        </div>
        <div className={`relative border-l ${line}`}>
          <VAxis ticks={rightMain} h={832} left={9} size="text-[11.5px]" />
          <div className="absolute left-0 top-[286px] w-[63px] h-[31px] bg-[#ff0000] rounded-r-[2px] flex flex-col justify-center pl-[9px] text-[11.5px] leading-[14px] text-white">
            <div className="font-bold">0.14%</div>
            <div className="text-[#ffd9d9]">02:37:48</div>
          </div>
          <div className="absolute left-0 top-[381px] w-[47px] h-[17px] bg-[#ffe733] rounded-r-[2px] flex items-center pl-[9px] text-[11.5px] text-[#57500c]">0.13%</div>
          <div className="absolute left-0 top-[619px] w-[47px] h-[17px] bg-[#ffe733] rounded-r-[2px] flex items-center pl-[9px] text-[11.5px] text-[#57500c]">0.10%</div>
        </div>
        <div className={`border-l ${line}`} />
        {/* row 2 */}
        <div className={`border-r border-t-2 ${line}`} />
        <div className={`border-t-2 ${line} overflow-hidden`}>
          <VolumeChart />
        </div>
        <div className={`border-l border-t-2 ${line}`}>
          <VAxis ticks={[["2000000000000.00%", 26], ["0.00%", 63]]} h={69} left={9} size="text-[11.5px]" />
        </div>
        <div className={`border-l border-t-2 ${line}`} />
        {/* row 3 */}
        <div className={`border-r border-t-2 ${line}`}>
          <VAxis ticks={leftOsc} h={311} left={12} size="text-[11.5px]" />
        </div>
        <div className={`border-t-2 ${line} overflow-hidden`}>
          <OscChart />
        </div>
        <div className={`border-l border-t-2 ${line}`}>
          <VAxis ticks={rightOsc} h={311} left={9} size="text-[11.5px]" />
        </div>
        <div className={`border-l border-t-2 ${line}`}>
          <VAxis ticks={farOsc} h={311} left={9} size="text-[11.5px]" />
        </div>
        {/* row 4 */}
        <div className={`border-r border-t-2 ${line} flex items-center justify-center`}>
          <Round l="Z" />
        </div>
        <div className={`border-t-2 ${line}`}>
          <TimeAxis />
        </div>
        <div className={`border-l border-t-2 ${line} flex items-center justify-center`}>
          <Round l="A" />
        </div>
        <div className={`border-l border-t-2 ${line} flex items-center justify-center`}>
          <Round l="B" />
        </div>
      </div>
      <div className="flex-1 flex items-center pl-[10px] gap-[4px]">
        <svg viewBox="0 0 36 28" className="w-[20px] h-[16px]" fill="#d1d4dc">
          <path d="M14 22H7V11H0V4h14v18zM28 22h-8l7.5-18h8L28 22z" />
          <circle cx="20" cy="8" r="4" />
        </svg>
        <span className="text-[13px] text-[#b2b5be] font-['Lato',sans-serif]">TradingView</span>
      </div>
    </div>
  );
}
